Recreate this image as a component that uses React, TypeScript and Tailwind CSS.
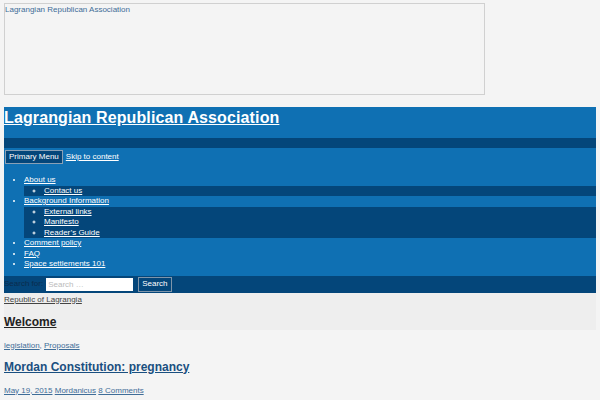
export default function App() {
  const sub = (items: string[]) => (
    <ul className="list-[circle] bg-[#04467a] pl-[20px]">
      {items.map((t) => (
        <li key={t} className="leading-[10.5px]">
          <a className="underline text-white">{t}</a>
        </li>
      ))}
    </ul>
  );

  return (
    <div className="min-h-screen bg-[#f4f4f4] px-[4px] pt-[3px] font-['Liberation_Sans',Arial,sans-serif] text-[8px]">
      {/* Logo placeholder */}
      <div className="h-[92px] w-[481px] border border-[#d0d0d0] text-[8px] leading-[12px] text-[#3f6d98]">
        Lagrangian Republican Association
      </div>

      {/* Header */}
      <header className="mt-[12px] w-[592px] bg-[#0f70b3] text-white">
        <div className="h-[31px] pt-[1px]">
          <a className="text-[16px] font-bold leading-[20px] tracking-[0.12px] underline">
            Lagrangian Republican Association
          </a>
        </div>
        <div className="h-[10px] bg-[#04467a]" />

        <div className="flex h-[22px] items-start gap-[3px] pl-px pt-[2px]">
          <button className="h-[14px] border border-[#8aa0b5] bg-[#04467a] px-[3px] text-[8px] leading-[12px] text-white">
            Primary Menu
          </button>
          <a className="leading-[14px] underline">Skip to content</a>
        </div>

        <ul className="list-disc pb-[6px] pl-[20px] pt-[5px]">
          <li className="leading-[10.5px]">
            <a className="underline">About us</a>
            {sub(["Contact us"])}
          </li>
          <li className="leading-[10.5px]">
            <a className="underline">Background Information</a>
            {sub(["External links", "Manifesto", "Reader’s Guide"])}
          </li>
          <li className="leading-[10.5px]">
            <a className="underline">Comment policy</a>
          </li>
          <li className="leading-[10.5px]">
            <a className="underline">FAQ</a>
          </li>
          <li className="leading-[10.5px]">
            <a className="underline">Space settlements 101</a>
          </li>
        </ul>

        <form className="flex h-[17px] items-center bg-[#04467a]">
          <label className="text-[#0b2c4c]">Search for:</label>
          <input
            className="ml-[3px] h-[13px] w-[87px] bg-white px-[2px] text-[8px] text-[#333] placeholder:text-[#bbb]"
            placeholder="Search …"
          />
          <button
            type="button"
            className="ml-[5px] h-[15px] border border-[#7f95aa] px-[3px] text-[8px] leading-[12px] text-white"
          >
            Search
          </button>
        </form>
      </header>

      {/* Breadcrumb / welcome */}
      <div className="h-[37px] w-[592px] bg-[#eeeeee]">
        <a className="block pt-[1px] leading-[11px] text-[#444] underline">Republic of Lagrangia</a>
        <h2 className="mt-[9px] text-[12px] font-bold leading-[16px] text-[#222]">
          <a className="underline">Welcome</a>
        </h2>
      </div>

      {/* Post */}
      <div className="mt-[10px] leading-[11px] text-[#3f6d98]">
        <a className="underline">legislation</a>, <a className="underline">Proposals</a>
      </div>
      <h2 className="mt-[8px] text-[12px] font-bold leading-[16px] text-[#1a4f80]">
        <a className="underline">Mordan Constitution: pregnancy</a>
      </h2>
      <div className="mt-[10px] leading-[11px] text-[#3f6d98]">
        <a className="underline">May 19, 2015</a> <a className="underline">Mordanicus</a>{" "}
        <a className="underline">8 Comments</a>
      </div>
    </div>
  );
}
